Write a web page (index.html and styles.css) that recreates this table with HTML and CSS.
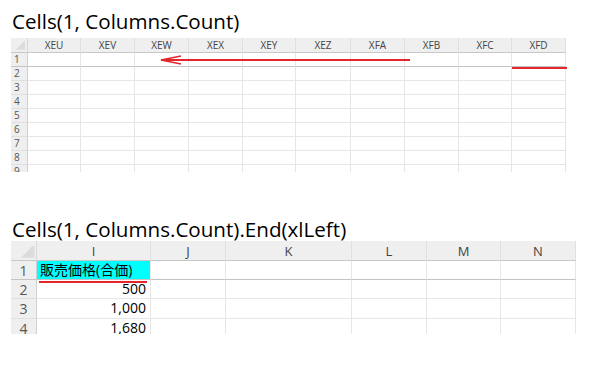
FILE: index.html
```html
<!DOCTYPE html>
<html lang="ja">
<head>
  <meta charset="UTF-8">
  <title>Cells と End(xlLeft)</title>
  <link rel="stylesheet" href="styles.css">
</head>
<body>
  <div class="page">
    <div class="caption caption-top">Cells(1, Columns.Count)</div>

    <!-- last columns of the sheet -->
    <div class="sheet">
      <div class="grid grid-last">
        <div class="corner"></div>
        <div class="col-head">XEU</div>
        <div class="col-head">XEV</div>
        <div class="col-head">XEW</div>
        <div class="col-head">XEX</div>
        <div class="col-head">XEY</div>
        <div class="col-head">XEZ</div>
        <div class="col-head">XFA</div>
        <div class="col-head">XFB</div>
        <div class="col-head">XFC</div>
        <div class="col-head">XFD</div>
      </div>
      <svg class="marks" width="570" height="140" viewBox="0 0 570 140">
        <line x1="150" y1="22" x2="399" y2="22" stroke="#e3262c" stroke-width="2"/>
        <polyline points="170,18 150,22 170,26" fill="none" stroke="#e3262c" stroke-width="1.6"/>
        <line x1="501" y1="30" x2="556" y2="30" stroke="#e3262c" stroke-width="2"/>
      </svg>
    </div>

    <div class="caption caption-bottom">Cells(1, Columns.Count).End(xlLeft)</div>

    <!-- columns I to N -->
    <div class="sheet">
      <div class="grid grid-named">
        <div class="corner"></div>
        <div class="col-head">I</div>
        <div class="col-head">J</div>
        <div class="col-head">K</div>
        <div class="col-head">L</div>
        <div class="col-head">M</div>
        <div class="col-head">N</div>
      </div>
      <svg class="marks" width="570" height="100" viewBox="0 0 570 100">
        <line x1="28" y1="41" x2="136" y2="41" stroke="#e3262c" stroke-width="2"/>
      </svg>
    </div>
  </div>

  <script>
    // fill the body rows of both grids
    function addRows(grid, rows, colCount) {
      rows.forEach(function (row, r) {
        const num = document.createElement('div');
        num.className = 'row-head' + (r === 0 ? ' first' : '');
        num.textContent = r + 1;
        grid.appendChild(num);
        for (let c = 0; c < colCount; c++) {
          const cell = document.createElement('div');
          cell.className = 'cell' + (r === 0 ? ' first' : '');
          const value = row[c];
          if (value !== undefined) {
            cell.textContent = value.text;
            if (value.cls) cell.className += ' ' + value.cls;
          }
          grid.appendChild(cell);
        }
      });
    }

    addRows(document.querySelector('.grid-last'), [[], [], [], [], [], [], [], [], []], 10);

    addRows(document.querySelector('.grid-named'), [
      [{ text: '販売価格(合価)', cls: 'label' }],
      [{ text: '500', cls: 'num' }],
      [{ text: '1,000', cls: 'num' }],
      [{ text: '1,680', cls: 'num' }],
      [{ text: '2,000', cls: 'num' }]
    ], 6);
  </script>
</body>
</html>
```

FILE: styles.css
```css
body {
  margin: 0;
  background: #fff;
  font-family: "Open Sans", "Noto Sans CJK JP", sans-serif;
  color: #000;
}
.page {
  padding: 9px 0 0 11px;
}
.caption {
  font-size: 20.6px;
  line-height: 24px;
  height: 24px;
  padding-left: 1px;
  white-space: nowrap;
}
.caption-top {
  margin-bottom: 5px;
}
.caption-bottom {
  margin-top: 45px;
}
.sheet {
  position: relative;
}
.grid {
  display: grid;
  overflow: hidden;
}
.grid-last {
  width: 555px;
  height: 134px;
  grid-template-columns: 17px 53px 54px 54px 54px 53px 55px 54px 54px 53px 54px;
  grid-template-rows: 15px;
  grid-auto-rows: 14px;
  font-size: 10px;
}
.grid-named {
  width: 565px;
  height: 93px;
  grid-template-columns: 26px 114px 75px 126px 75px 74px 75px;
  grid-template-rows: 20px 19px 19px 20px 19px;
  grid-auto-rows: 19px;
  font-size: 14px;
}
.grid > div {
  box-sizing: border-box;
  overflow: hidden;
  white-space: nowrap;
}
.corner {
  background: #efefef linear-gradient(135deg, transparent 50%, #dcdcdc 50%) no-repeat;
  background-size: 62% 62%;
  background-position: right 2px bottom 2px;
  border-right: 1px solid #d8d8d8;
  border-bottom: 1px solid #c8c8c8;
}
.col-head {
  background: #efefef;
  color: #444;
  text-align: center;
  border-right: 1px solid #e0e0e0;
  border-bottom: 1px solid #c8c8c8;
}
.grid-last .col-head {
  line-height: 14px;
}
.grid-named .col-head {
  font-size: 13px;
  line-height: 17px;
  padding-top: 2px;
}
.row-head {
  background: #efefef;
  color: #555;
  text-align: center;
  border-right: 1px solid #d0d0d0;
  border-bottom: 1px solid #e0e0e0;
}
.grid-last .row-head {
  line-height: 13px;
  text-align: left;
  padding-left: 3px;
}
.grid-named .row-head {
  font-size: 14px;
  line-height: 19px;
}
.cell {
  border-right: 1px solid #e6e6e6;
  border-bottom: 1px solid #e6e6e6;
}
.grid-named .cell {
  line-height: 18px;
}
.row-head.first,
.cell.first {
  border-bottom-color: #c4c4c4;
}
.label {
  background: #00ffff;
  padding-left: 3px;
}
.num {
  text-align: right;
  padding-right: 4px;
}
.marks {
  position: absolute;
  left: 0;
  top: 0;
  pointer-events: none;
}
```
